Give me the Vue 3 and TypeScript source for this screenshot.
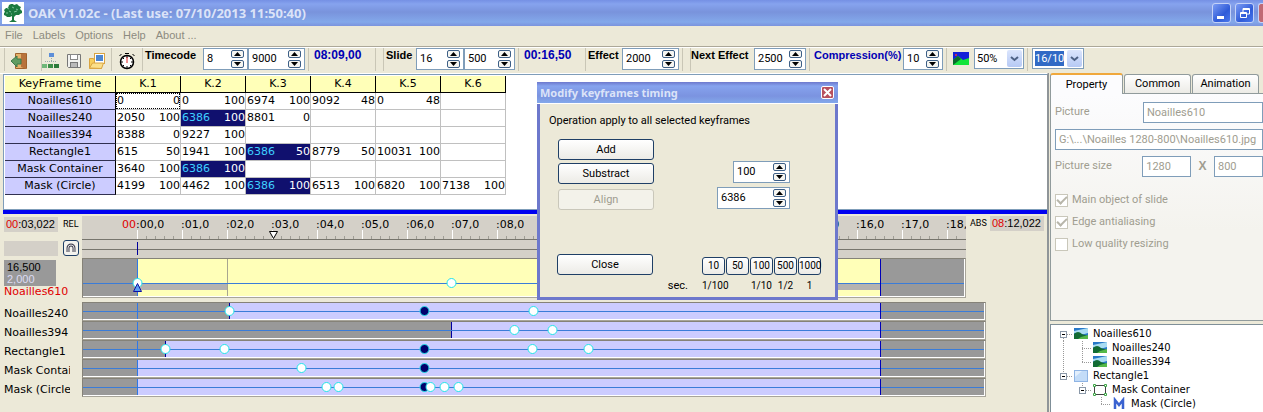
<script setup lang="ts">
import { ref } from 'vue'

interface Key { t: number; o: number; sel?: boolean }
interface Track { name: string; start: number; keys: { t: number; sel?: boolean }[] }

const menus = ['File', 'Labels', 'Options', 'Help', 'About ...']
const columns = ['K.1', 'K.2', 'K.3', 'K.4', 'K.5', 'K.6']
const k = (t: number, o: number, sel = false): Key => ({ t, o, sel })
const pad = (list: Key[]): (Key | null)[] => columns.map((_, i) => list[i] ?? null)
const table = [
  { name: 'Noailles610', cells: pad([k(0, 0), k(0, 100), k(6974, 100), k(9092, 48), k(0, 48)]) },
  { name: 'Noailles240', cells: pad([k(2050, 100), k(6386, 100, true), k(8801, 0)]) },
  { name: 'Noailles394', cells: pad([k(8388, 0), k(9227, 100)]) },
  { name: 'Rectangle1', cells: pad([k(615, 50), k(1941, 100), k(6386, 50, true), k(8779, 50), k(10031, 100)]) },
  { name: 'Mask Container', cells: pad([k(3640, 100), k(6386, 100, true)]) },
  { name: 'Mask (Circle)', cells: pad([k(4199, 100), k(4462, 100), k(6386, 100, true), k(6513, 100), k(6820, 100), k(7138, 100)]) },
]

const origin = 55
// Tracks sit inside a one-pixel frame, so their zero is one pixel to the left of the ruler's.
const x = (ms: number) => Math.round(origin - 1 + ms * 0.045)
const slideEnd = 16500
const tracks: Track[] = [
  { name: 'Noailles240', start: 2050, keys: [{ t: 2050 }, { t: 6386, sel: true }, { t: 8801 }] },
  { name: 'Noailles394', start: 6974, keys: [{ t: 8388 }, { t: 9227 }] },
  { name: 'Rectangle1', start: 615, keys: [{ t: 615 }, { t: 1941 }, { t: 6386, sel: true }, { t: 8779 }, { t: 10031 }] },
  { name: 'Mask Container', start: 0, keys: [{ t: 3640 }, { t: 6386, sel: true }] },
  { name: 'Mask (Circle)', start: 0, keys: [{ t: 4199 }, { t: 4462 }, { t: 6386, sel: true }, { t: 6513 }, { t: 6820 }, { t: 7138 }] },
]
const seconds = Array.from({ length: 19 }, (_, i) => i)
const minor = Array.from({ length: 92 }, (_, i) => i).filter((i) => i % 5 !== 0)
const two = (n: number) => String(n).padStart(2, '0')

const tree = [
  { name: 'Noailles610', gutter: 22, icon: 'pic', box: 12, lines: 'M12.5 7V14M12 7.5H22' },
  { name: 'Noailles240', gutter: 41, icon: 'pic', box: 0, lines: 'M12.5 0V14M31.5 0V14M31 7.5H41' },
  { name: 'Noailles394', gutter: 41, icon: 'pic', box: 0, lines: 'M12.5 0V14M31.5 0V8M31 7.5H41' },
  { name: 'Rectangle1', gutter: 22, icon: 'rect', box: 12, lines: 'M12.5 0V7M12 7.5H22' },
  { name: 'Mask Container', gutter: 41, icon: 'frame', box: 31, lines: 'M31.5 0V7M31 7.5H41' },
  { name: 'Mask (Circle)', gutter: 60, icon: 'mask', box: 0, lines: 'M50.5 0V8M50 7.5H60' },
]
const steps = [
  { n: '10', s: '1/100' }, { n: '50', s: '' }, { n: '100', s: '1/10' }, { n: '500', s: '1/2' }, { n: '1000', s: '1' },
]
const v = ref({ tc1: '8', tc2: '9000', sl1: '16', sl2: '500', eff: '2000', next: '2500', comp: '10', add: '100', align: '6386' })
type Field = keyof typeof v.value
const amounts: Field[] = ['add', 'align']
const bump = (f: Field, d: number) => { v.value[f] = String(Number(v.value[f]) + d) }
const groups: { cls: string; label?: string; fields?: { f: Field; cls: string; name: string }[]; value?: string }[] = [
  { cls: 'g-time', label: 'Timecode', fields: [{ f: 'tc1', cls: 'w45', name: 'Timecode seconds' }, { f: 'tc2', cls: 'w57', name: 'Timecode milliseconds' }] },
  { cls: 'g-value', value: '08:09,00' },
  { cls: 'g-gap' },
  { cls: 'g-slide', label: 'Slide', fields: [{ f: 'sl1', cls: 'w48', name: 'Slide seconds' }, { f: 'sl2', cls: 'w51', name: 'Slide milliseconds' }] },
  { cls: 'g-value', value: '00:16,50' },
  { cls: 'g-effect', label: 'Effect', fields: [{ f: 'eff', cls: 'w57', name: 'Effect' }] },
  { cls: 'g-gap' },
  { cls: 'g-next', label: 'Next Effect', fields: [{ f: 'next', cls: 'w52', name: 'Next Effect' }] },
  { cls: 'g-comp', label: 'Compression(%)', fields: [{ f: 'comp', cls: 'w40', name: 'Compression' }] },
]
</script>

<template>
  <div class="app">
    <header class="titlebar">
      <svg class="logo" width="22" height="22" viewBox="0 0 22 22" aria-hidden="true">
        <rect width="22" height="22" fill="#fff" />
        <path d="M7 3l2-1 2 0 1 1 3-1 2 2 2 1-1 2 2 2 0 2-2 1-1 1-3 0-1 1-1 1v3l3 2H7l3-2v-4l-2 1-3 0-1-1-2-1 0-2 1-1-1-2 2-2 2 0z" fill="#1c7a40" />
        <path d="M5 6l2 1M10 5l2 1M14 7l2 1M7 9l2 1M12 10l3-1M4 11h2M9 12h1" stroke="#7cc298" />
      </svg>
      <h1>OAK V1.02c - (Last use: 07/10/2013 11:50:40)</h1>
      <button class="win" aria-label="Minimize"><svg width="18" height="18"><rect x="4" y="12" width="7" height="3" fill="#fff" /></svg></button>
      <button class="win" aria-label="Restore"><svg width="18" height="18"><path d="M7 8V4.500H13.500V10H11M7 5.500H13" fill="none" stroke="#fff" /><path d="M4.500 8.500H10.500V13.500H4.500ZM4 9.500H11" fill="none" stroke="#fff" /></svg></button>
      <button class="win shut" aria-label="Close window"></button>
    </header>

    <nav class="menu">
      <button v-for="m in menus" :key="m">{{ m }}</button>
    </nav>

    <div class="toolbar">
      <div class="group g-exit">
        <button class="tool" aria-label="Exit"><svg width="18" height="18"><path d="M5.500 1.500H16.500V16.500H5.500Z" fill="#e5b26a" stroke="#a0622c" /><path d="M11 2l5-1v16l-5-2z" fill="#b8733b" /><path d="M1 9l6-5v3h4v5H7v3z" fill="#5f9c62" stroke="#3b7a4b" /></svg></button>
      </div>
      <div class="group g-files">
        <button class="tool" aria-label="Structure"><svg width="18" height="18"><path d="M9.500 6v4M3 9.500h12" fill="none" stroke="#9aa" stroke-dasharray="1 1" /><rect x="7" y="1" width="5" height="4" fill="#5d8fd8" /><rect x="0" y="12" width="5" height="4" fill="#6fb779" /><rect x="6" y="12" width="5" height="4" fill="#3d8f49" /><rect x="12" y="12" width="5" height="4" fill="#2c7a3a" /></svg></button>
        <button class="tool" aria-label="Save"><svg width="18" height="18"><path d="M2.500 2.500H15.500V15.500H3.500L2.500 14.500Z" fill="#f1f1ee" stroke="#777" /><rect x="5.500" y="2.500" width="7" height="5" fill="#fff" stroke="#888" /><rect x="5.500" y="10.500" width="7" height="5" fill="#b9b9b9" stroke="#777" /></svg></button>
        <button class="tool" aria-label="Open"><svg width="18" height="18"><path d="M1.500 6.500h4l1 2h7v8h-12z" fill="#f7cf5c" stroke="#d9a441" /><rect x="6.500" y="1.500" width="10" height="10" fill="#fff" stroke="#d9a441" /><rect x="8" y="3" width="7" height="6" fill="#4d86cf" /><path d="M1.500 16l3-5h11l-2 5.500z" fill="#fbe08a" stroke="#d9a441" /></svg></button>
      </div>
      <div class="group g-watch">
        <button class="tool" aria-label="Timer"><svg width="18" height="18"><circle cx="9" cy="10" r="6.500" fill="#fff" stroke="#000" stroke-width="1.500" /><path d="M9 3v3M9 14v3M2 10h3M13 10h3M4 5l2 2M14 5l-2 2M4 15l2-2M14 15l-2-2M7 1.500h4M1.500 4l2-2M16.500 4l-2-2" stroke="#000" /><path d="M9 5v6" stroke="#d22" /></svg></button>
      </div>
      <div v-for="(g, gi) in groups" :key="gi" class="group" :class="g.cls">
        <label v-if="g.label" :for="g.fields![0].f">{{ g.label }}</label>
        <output v-if="g.value">{{ g.value }}</output>
        <span v-for="s in g.fields || []" :key="s.f" class="spin" :class="s.cls">
          <input :id="s.f" v-model="v[s.f]" :aria-label="s.name" />
          <span class="arrows">
            <button aria-label="Increase" @click="bump(s.f, 1)"><svg width="7" height="4"><path d="M0 4L3.500 0L7 4Z" /></svg></button>
            <button aria-label="Decrease" @click="bump(s.f, -1)"><svg width="7" height="4"><path d="M0 0L3.500 4L7 0Z" /></svg></button>
          </span>
        </span>
      </div>
      <div class="group g-zoom">
        <svg width="16" height="13" aria-hidden="true"><rect width="16" height="13" fill="#1420d8" /><path d="M0 8L5 4L10 8L16 6V13H0Z" fill="#12e43a" /><path d="M0 8L5 4L8 7L4 10L0 13Z" fill="#0c6a2c" /><circle cx="3" cy="3" r="1" fill="#e33" /></svg>
        <span class="combo w50">
          <select aria-label="Zoom"><option>50%</option><option>100%</option></select>
          <span class="drop"><svg width="9" height="6"><path d="M1 1L4.500 4L8 1" /></svg></span>
        </span>
      </div>
      <div class="group g-ratio">
        <span class="combo picked w52">
          <select aria-label="Aspect ratio"><option>16/10</option><option>4/3</option></select>
          <span class="drop"><svg width="9" height="6"><path d="M1 1L4.500 4L8 1" /></svg></span>
        </span>
      </div>
    </div>

    <div class="body">
      <main class="left">
        <section class="sheet">
          <table>
            <thead>
              <tr><th class="first" scope="col">KeyFrame time</th><th v-for="c in columns" :key="c" scope="col">{{ c }}</th></tr>
            </thead>
            <tbody>
              <tr v-for="(r, ri) in table" :key="r.name">
                <th scope="row">{{ r.name }}</th>
                <td v-for="(c, ci) in r.cells" :key="ci" :class="{ sel: c?.sel, focus: ri === 0 && ci === 0 }">
                  <div v-if="c" class="pair"><span>{{ c.t }}</span><b>{{ c.o }}</b></div>
                </td>
              </tr>
            </tbody>
          </table>
        </section>

        <section class="timeline">
          <div class="line">
            <div class="side scale">
              <div class="clock-row"><span class="clock"><i>00</i>:03,022</span><small>REL</small></div>
              <div class="clock-row low"><span class="clock"></span>
                <button class="magnet" aria-label="Snap"><svg width="10" height="10"><path d="M2 9V5a3 3 0 0 1 6 0v4" fill="none" stroke="#445" stroke-width="3" /><path d="M2 9V5a3 3 0 0 1 6 0v4" fill="none" stroke="#ddd" /></svg></button>
              </div>
            </div>
            <svg class="ruler" height="42">
              <path v-for="m in minor" :key="'m' + m" :d="`M${origin + m * 9 + 0.5} 20v3`" stroke="#a09e96" />
              <path v-for="s in seconds" :key="'s' + s" :d="`M${origin + s * 45 + 0.5} 14v9`" stroke="#fff" />
              <text x="40" y="12" class="red">00</text>
              <text v-for="s in seconds" :key="'t' + s" :x="origin + s * 45 - 1" y="12">:{{ two(s) }},0</text>
              <rect y="23" width="100%" height="1" fill="#77756d" /><rect y="33" width="100%" height="1" fill="#77756d" />
              <rect :x="origin" y="26" width="1" height="13" fill="#00009c" />
              <path d="M187.500 15.500h8l-4 7z" fill="#fff" stroke="#000" />
            </svg>
            <div class="abs"><small>ABS</small><span class="clock"><i>08</i>:12,022</span></div>
          </div>

          <div class="line master">
            <div class="side">
              <div class="length"><span>16,500</span><span class="pale">2,000</span></div>
              <div class="name red">Noailles610</div>
            </div>
            <div class="frame">
              <svg class="track" height="37">
                <rect :x="x(0)" y="0" :width="x(slideEnd) - x(0)" height="37" fill="#ffffb8" />
                <rect :x="x(0)" y="25" :width="x(2000) - x(0)" height="6" fill="#b4b2b0" />
                <rect :x="x(14500)" y="25" :width="x(slideEnd) - x(14500)" height="6" fill="#b4b2b0" />
                <rect :x="x(2000)" y="0" width="1" height="37" fill="#a8a690" />
                <rect y="24" width="100%" height="1" fill="#3a7cd8" />
                <rect :x="x(0)" y="0" width="1" height="37" fill="#2f78e8" />
                <rect :x="x(slideEnd)" y="0" width="1" height="37" fill="#0000b8" />
                <circle v-for="t in [0, 6974]" :key="t" :cx="x(t) + 0.5" cy="24" r="4.500" fill="#fff" stroke="#22e4e8" />
                <path d="M50.500 32.500h8l-4-8z" fill="#5b9cf0" stroke="#1010a0" />
              </svg>
            </div>
          </div>

          <div class="stack">
            <div v-for="t in tracks" :key="t.name" class="line">
              <div class="side"><div class="name">{{ t.name }}</div></div>
              <div class="frame">
                <svg class="track" height="16">
                  <rect :x="x(t.start)" y="0" :width="x(slideEnd) - x(t.start)" height="16" fill="#ccccff" />
                  <rect v-if="t.start" :x="x(t.start)" width="1" height="16" fill="#0000a0" />
                  <rect y="8" width="100%" height="1" fill="#3a7cd8" />
                  <rect :x="x(0)" width="1" height="16" fill="#2f78e8" />
                  <rect :x="x(slideEnd)" width="1" height="16" fill="#0000b8" />
                  <circle v-for="p in t.keys" :key="p.t" :cx="x(p.t) + 0.5" cy="8" r="4.500" :fill="p.sel ? '#00006c' : '#fff'" stroke="#22e4e8" />
                </svg>
              </div>
            </div>
          </div>
        </section>
      </main>

      <aside class="right">
        <div class="tabs" role="tablist">
          <button class="on" role="tab" aria-selected="true">Property</button>
          <button role="tab">Common</button>
          <button role="tab">Animation</button>
        </div>
        <form class="props">
          <div class="frow"><label for="pic">Picture</label><input id="pic" class="wide" value="Noailles610" disabled /></div>
          <div class="frow"><input class="path" aria-label="File path" value="G:\...\Noailles 1280-800\Noailles610.jpg" disabled /></div>
          <div class="frow"><label for="pw">Picture size</label><input id="pw" value="1280" disabled /><strong>X</strong><input aria-label="Picture height" value="800" disabled /></div>
          <div class="checks">
            <label><input type="checkbox" checked disabled />Main object of slide</label>
            <label><input type="checkbox" checked disabled />Edge antialiasing</label>
            <label><input type="checkbox" disabled />Low quality resizing</label>
          </div>
        </form>
        <ul class="tree">
          <li v-for="n in tree" :key="n.name">
            <svg :width="n.gutter" height="14" aria-hidden="true">
              <path :d="n.lines" fill="none" stroke="#999" stroke-dasharray="1 1" />
              <g v-if="n.box"><rect :x="n.box - 2.5" y="4.500" width="6" height="6" fill="#fff" stroke="#8a98a8" /><path :d="`M${n.box - 1} 7.500h3`" stroke="#000" /></g>
            </svg>
            <svg width="16" height="14" aria-hidden="true">
              <template v-if="n.icon === 'pic'"><rect x="1" y="1" width="14" height="11" fill="#2778c8" /><path d="M1 4L15 1V6L8 8L1 6Z" fill="#a9dcf2" /><path d="M1 7Q5 3 9 7L15 9V12H1Z" fill="#126b34" /><path d="M8 10L15 8V12H5Z" fill="#55b948" /></template>
              <template v-else-if="n.icon === 'rect'"><rect x="1.500" y="1.500" width="13" height="11" fill="#c3dcf8" stroke="#8fb4e4" /><path d="M2 2H9L2 8Z" fill="#e3effc" /></template>
              <template v-else-if="n.icon === 'frame'"><rect x="2.500" y="2.500" width="11" height="9" fill="#fff" stroke="#444" /><path d="M1.500 1.500h2v2h-2zM12.500 1.500h2v2h-2zM1.500 10.500h2v2h-2zM12.500 10.500h2v2h-2z" fill="#fff" stroke="#3fa648" /></template>
              <path v-else d="M4 12V3L8 8L12 3V12" fill="none" stroke="#3a62d0" stroke-width="2.500" />
            </svg>
            <span>{{ n.name }}</span>
          </li>
        </ul>
      </aside>
    </div>

    <div class="dialog" role="dialog" aria-labelledby="dlg">
      <div class="dtitle"><h2 id="dlg">Modify keyframes timing</h2>
        <button aria-label="Close dialog"><svg width="11" height="11"><path d="M2 2L9 9M9 2L2 9" stroke="#fff" stroke-width="2" /></svg></button>
      </div>
      <div class="dbody">
        <p>Operation apply to all selected keyframes</p>
        <div class="ops">
          <div class="actions">
            <button class="xp">Add</button>
            <button class="xp">Substract</button>
            <button class="xp" disabled>Align</button>
          </div>
          <div class="amounts">
            <span v-for="f in amounts" :key="f" class="spin" :class="f">
              <input v-model="v[f]" :aria-label="f" />
              <span class="arrows">
                <button aria-label="Increase" @click="bump(f, 1)"><svg width="7" height="4"><path d="M0 4L3.500 0L7 4Z" /></svg></button>
                <button aria-label="Decrease" @click="bump(f, -1)"><svg width="7" height="4"><path d="M0 0L3.500 4L7 0Z" /></svg></button>
              </span>
            </span>
          </div>
        </div>
        <div class="foot">
          <button class="xp">Close</button>
          <div class="steps">
            <span class="sec">sec.</span>
            <div v-for="s in steps" :key="s.n" class="step"><button class="xp">{{ s.n }}</button><span>{{ s.s }}</span></div>
          </div>
        </div>
      </div>
    </div>
  </div>
</template>

<style>
body { margin: 0; background: #ece9d8; }
</style>

<style scoped>
* { box-sizing: border-box; }
button, input, select { font: inherit; color: inherit; margin: 0; padding: 0; border-radius: 0; }
svg { display: block; flex: none; }
.app { position: relative; min-height: 100vh; display: flex; flex-direction: column; overflow: hidden; background: #ece9d8; color: #000; font: 11px/14px Roboto, "Liberation Sans", sans-serif; }
h1, h2, p, ul { margin: 0; padding: 0; }

.titlebar { height: 26px; display: flex; align-items: center; gap: 4px; padding-left: 2px; background: linear-gradient(#7590e4, #86a3ee 4px, #7993dc 12px, #83a8ea 22px, #7b93dd); color: #dbe3f8; }
.titlebar h1 { flex: 1; font: bold 13px/18px "Noto Sans", "Open Sans", sans-serif; }
.win { width: 19px; height: 20px; border: 1px solid #c4d2f8; border-radius: 3px; background: linear-gradient(135deg, #7c9cf4, #2f5bd8 60%, #4a78ec); overflow: hidden; }
.shut { width: 5px; border-right: 0; border-radius: 3px 0 0 3px; background: #c06a74; }
.menu { height: 21px; display: flex; align-items: center; gap: 10px; padding: 0 5px 2px; border-bottom: 1px solid #aca899; font: 11px/14px "Liberation Sans", sans-serif; color: #8d8b80; }
.menu button { border: 0; background: none; }

.toolbar { display: flex; height: 26px; padding: 0 0 0 4px; border-top: 1px solid #fff; }
.group { flex: none; display: flex; align-items: flex-start; height: 23px; padding: 0 3px 0 2px; border-left: 1px solid #c9c6b6; }
.group label, .group output { flex: 1; white-space: nowrap; font: bold 11px/15px "Liberation Sans", sans-serif; }
.group output { padding-left: 3px; color: #0000b4; font-size: 12px; }
.tool { width: 18px; height: 22px; padding-top: 3px; border: 0; background: none; }
.g-exit { width: 37px; padding-left: 5px; }
.g-files { width: 70px; gap: 5px; padding-left: 0; }
.g-watch { width: 31px; padding-left: 6px; }
.g-time { width: 166px; }
.g-value { width: 67px; }
.g-gap { width: 8px; padding: 0; }
.g-slide { width: 135px; }
.g-effect { width: 97px; }
.g-next { width: 119px; padding-left: 0; }
.g-comp { width: 137px; padding-left: 4px; }
.g-comp label { color: #0000b4; }
.g-zoom { width: 81px; padding-left: 6px; justify-content: space-between; }
.g-zoom > svg { margin-top: 4px; }
.g-ratio { padding-left: 4px; }
.spin { flex: none; display: flex; align-items: center; height: 22px; padding: 0 3px 0 3px; border: 1px solid #7f9db9; background: #fff; }
.spin input { flex: 1; min-width: 0; width: 0; border: 0; outline: 0; background: none; }
.arrows { display: flex; flex-direction: column; gap: 2px; }
.arrows button { display: flex; align-items: center; justify-content: center; width: 13px; height: 8px; border: 1px solid #3d5f86; border-radius: 2px; background: #f6f6f2; }
.w40 { width: 40px; } .w45 { width: 45px; } .w48 { width: 48px; } .w50 { width: 50px; }
.w51 { width: 51px; } .w52 { width: 52px; } .w57 { width: 57px; }
.combo { display: flex; height: 21px; padding: 2px 1px 2px 2px; border: 1px solid #7f9db9; background: #fff; }
.combo select { flex: 1; min-width: 0; border: 0; outline: 0; appearance: none; background: none; }
.picked select { margin-right: 3px; background: #316ac5; color: #fff; }
.drop { display: flex; align-items: center; justify-content: center; width: 15px; margin: -1px 0; border-radius: 2px; background: linear-gradient(#dbe5fd, #b6c9f4); }
.drop path { fill: none; stroke: #4d6185; stroke-width: 2; }

.body { flex: 1; display: flex; }
.left { flex: 1; min-width: 0; display: flex; flex-direction: column; padding-left: 3px; border-top: 1px solid #fff; border-right: 1px solid #8f9598; }
.sheet { height: 136px; padding: 1px; border: 1px solid #7f9db9; border-right: 0; background: #fff; font: 11px/14px "DejaVu Sans", sans-serif; }
.sheet table { table-layout: fixed; width: 501px; border-collapse: separate; border-spacing: 0; }
.sheet th, .sheet td { height: 17px; padding: 0; font-weight: normal; }
.sheet td { border-right: 1px solid #c0c0c0; border-bottom: 1px solid #c0c0c0; }
.sheet th { border-right: 1px solid #000; border-bottom: 1px solid #000; background: #ccccff; text-align: center; }
.sheet tbody th { border-bottom-color: #303050; }
.sheet thead th { background: #ffffb8; }
.sheet .first { width: 111px; }
.pair { display: flex; justify-content: space-between; height: 16px; padding-left: 1px; line-height: 16px; }
.pair b { font-weight: normal; }
.sheet .sel { background: #10106e; color: #3fd0ff; }
.sel b { color: #fff; }
.focus .pair { outline: 1px dotted #000; outline-offset: -1px; }

.timeline { flex: 1; border-top: 4px solid #0000f0; padding-top: 2px; font: 11px/14px "DejaVu Sans", sans-serif; }
.line { display: flex; }
.side { flex: none; width: 79px; padding-left: 1px; }
.clock { display: block; width: 54px; height: 15px; background: #d4d0c8; white-space: nowrap; font: 11px/15px "Liberation Sans", sans-serif; padding-left: 2px; }
.clock i { font-style: normal; color: #e00000; }
.clock-row { display: flex; align-items: center; gap: 5px; height: 16px; }
.low { margin-top: 8px; }
small { font: 9px/15px Roboto, sans-serif; }
.clock-row small { width: 18px; }
.magnet { display: flex; align-items: center; justify-content: center; width: 16px; height: 16px; border: 1px solid #1f3f66; border-radius: 3px; background: #f4f3ee; }
.ruler { flex: 1; min-width: 0; background: #d4d0c8; }
.abs { flex: none; width: 81px; display: flex; justify-content: space-between; padding: 0 3px 0 4px; }
.frame { flex: 1; min-width: 0; padding: 0 1px 1px 0; border: 1px solid #a8a59a; border-top-color: #858278; border-left-color: #858278; background: #fff; }
.track { width: 100%; background: #999; }
.red { color: #e00000; fill: #e00000; }
.master { padding-right: 81px; }
.master .side { padding-top: 2px; }
.length { width: 52px; height: 26px; padding: 1px 3px; background: #999; line-height: 12px; font-family: "Liberation Sans", sans-serif; }
.length span { display: block; }
.pale { color: #dcdcf4; }
.name { overflow: hidden; width: 66px; white-space: nowrap; line-height: 12px; }
.stack { display: flex; flex-direction: column; padding: 4px 61px 0 0; }
.stack .name { padding-top: 4px; line-height: 15px; }

.right { flex: none; width: 215px; display: flex; flex-direction: column; padding-left: 1px; border-left: 1px solid #8f9598; }
.tabs { display: flex; align-items: flex-end; height: 21px; border-bottom: 1px solid #919b9c; }
.tabs button { width: 67px; height: 19px; border: 1px solid #919b9c; border-bottom: 0; border-radius: 3px 3px 0 0; background: linear-gradient(#fff, #ecebe6); margin-right: 1px; }
.tabs .on { width: 73px; height: 21px; margin-bottom: -1px; border-top: 2px solid #f0a83c; background: #fcfcfe; }
.props { display: flex; flex-direction: column; gap: 5px; height: 227px; padding: 7px 0 0 4px; border-left: 1px solid #919b9c; border-bottom: 1px solid #919b9c; background: linear-gradient(#fcfcfe, #f4f3ee 60%); color: #a09d90; }
.frow { display: flex; align-items: center; height: 22px; }
.frow label { width: 88px; }
.frow input { width: 49px; height: 21px; padding: 0 3px; border: 1px solid #7f9db9; background: #fff; }
.frow .wide { width: 120px; }
.frow .path { flex: 1; }
.frow strong { width: 23px; text-align: center; font: bold 12px/14px "Liberation Sans", sans-serif; }
.checks { display: flex; flex-direction: column; gap: 8px; padding-top: 11px; }
.checks label { display: flex; align-items: center; gap: 4px; }
.checks input { display: flex; align-items: center; justify-content: center; appearance: none; width: 13px; height: 13px; border: 1px solid #c9c7ba; background: #fff; }
.checks input:checked::after { content: ""; width: 8px; height: 4px; margin-bottom: 3px; border-left: 2px solid #b8b6aa; border-bottom: 2px solid #b8b6aa; transform: rotate(-45deg); }
.tree { flex: 1; margin-top: 3px; padding-top: 2px; border-top: 1px solid #7f8f98; border-left: 1px solid #7f8f98; background: #fff; list-style: none; font: 10px/14px "DejaVu Sans", sans-serif; }
.tree li { display: flex; align-items: center; height: 14px; }
.tree span { padding-left: 4px; }

.dialog { position: absolute; left: 537px; top: 82px; width: 301px; border: 3px solid #6d78cc; border-top: 0; background: #ece9d8; }
.dtitle { display: flex; align-items: center; justify-content: space-between; height: 22px; margin: 0 -3px; padding: 0 4px 0 3px; background: linear-gradient(#6d78cc, #86a3ee 4px, #7b93e0 14px, #83a8ea); color: #dbe3f8; border-bottom: 1px solid #fff; }
.dtitle h2 { font: bold 11px/16px "Noto Sans", "Open Sans", sans-serif; }
.dtitle button { display: flex; align-items: center; justify-content: center; width: 13px; height: 13px; border: 1px solid #fff; border-radius: 2px; background: #b8505e; }
.dbody { padding: 10px 14px 4px 9px; }
.ops { display: flex; justify-content: space-between; padding: 11px 31px 0 9px; }
.actions { display: flex; flex-direction: column; gap: 3px; }
.xp { height: 21px; width: 96px; border: 1px solid #1f3f66; border-radius: 3px; background: linear-gradient(#fff, #ecebe6); }
.xp:disabled { border-color: #c9c7ba; color: #a09d90; background: #f3f2ea; margin-top: 2px; }
.amounts { display: flex; flex-direction: column; align-items: flex-end; gap: 4px; padding-top: 22px; }
.add { width: 57px; } .align { width: 73px; }
.foot { display: flex; justify-content: space-between; padding: 44px 0 0 8px; }
.steps { display: flex; gap: 1px; margin-top: 3px; }
.step { width: 23px; text-align: center; font: 10px/14px Roboto, sans-serif; }
.step .xp { width: 23px; height: 18px; }
.step span { display: block; margin-top: 4px; white-space: nowrap; }
.sec { align-self: flex-end; padding-right: 13px; }
</style>
